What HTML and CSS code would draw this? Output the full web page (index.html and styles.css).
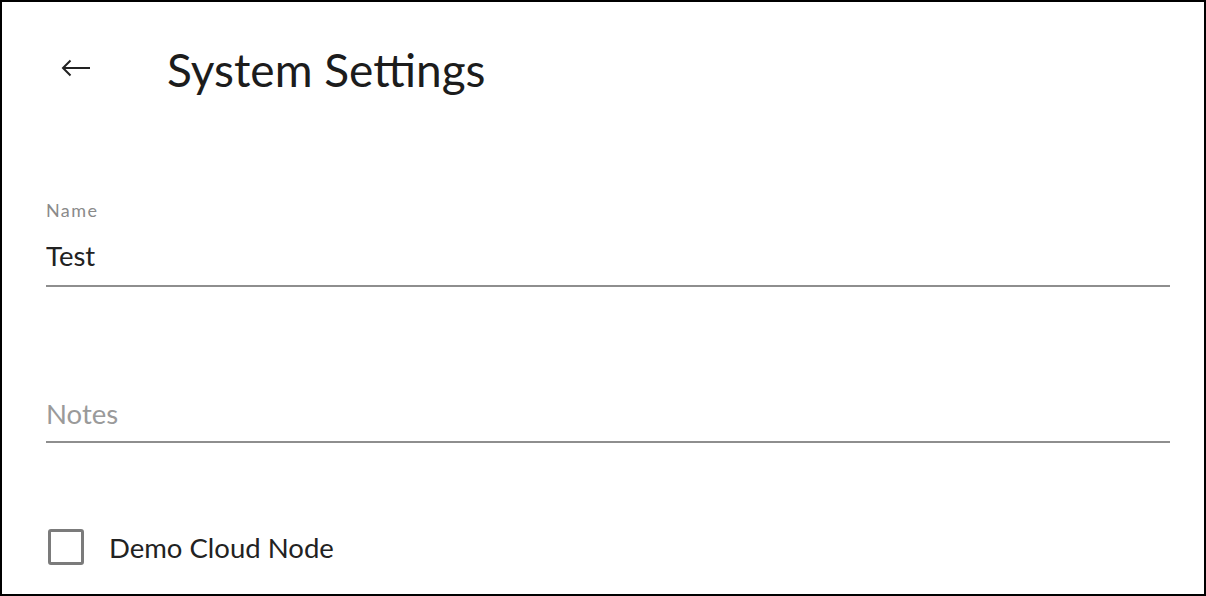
FILE: index.html
```html
<!DOCTYPE html>
<html lang="en">
<head>
    <meta charset="UTF-8">
    <meta name="viewport" content="width=device-width, initial-scale=1.0">
    <title>System Settings</title>
    <link rel="stylesheet" href="styles.css">
</head>
<body>
    <div class="frame">
        <div class="header">
            <button class="back-btn" type="button" aria-label="Back">
                <svg width="30" height="20" viewBox="0 0 30 20">
                    <path d="M2 10 H29 M9.5 2.5 L2 10 L9.5 17.5" fill="none" stroke="#222" stroke-width="2"/>
                </svg>
            </button>
            <h1>System Settings</h1>
        </div>

        <form class="settings-form">
            <div class="field filled">
                <label for="name">Name</label>
                <input id="name" type="text" value="Test">
            </div>

            <div class="field">
                <input id="notes" type="text" placeholder="Notes">
            </div>

            <label class="check-row">
                <span class="check-box"></span>
                <span class="check-label">Demo Cloud Node</span>
            </label>
        </form>
    </div>
</body>
</html>
```

FILE: styles.css
```css
body {
    font-family: Lato, "Open Sans", sans-serif;
    margin: 0;
    padding: 0;
    background-color: white;
}
.frame {
    height: 596px;
    box-sizing: border-box;
    border: 2px solid #000;
    background-color: white;
}
.header {
    display: flex;
    align-items: center;
    height: 134px;
    padding-left: 57px;
}
.back-btn {
    background: none;
    border: none;
    padding: 0;
    width: 34px;
    height: 34px;
    display: flex;
    align-items: center;
    justify-content: center;
    margin-right: 74px;
    margin-top: -2px;
    cursor: pointer;
}
.header h1 {
    margin: 0;
    font-size: 46px;
    font-weight: 400;
    color: #1c1c1c;
}
.settings-form {
    padding: 64px 34px 0 44px;
}
.field {
    display: flex;
    flex-direction: column;
    border-bottom: 2px solid #8e8e8e;
}
.field label {
    font-size: 18px;
    letter-spacing: 1.4px;
    color: #8a8a8a;
    line-height: 20px;
}
.field input {
    border: none;
    outline: none;
    padding: 0;
    font-family: inherit;
    font-size: 27.5px;
    color: #222;
    height: 56px;
    background: transparent;
}
.field input::placeholder {
    color: #9a9a9a;
}
.field.filled input {
    height: 54px;
    padding: 8px 0 3px;
}
.field + .field {
    margin-top: 98px;
}
.check-row {
    display: flex;
    align-items: center;
    margin-top: 86px;
    cursor: pointer;
}
.check-box {
    width: 30px;
    height: 30px;
    border: 3px solid #7b7b7b;
    border-radius: 3px;
    margin-left: 2px;
    margin-right: 25px;
}
.check-label {
    font-size: 27.5px;
    color: #222;
}
```
